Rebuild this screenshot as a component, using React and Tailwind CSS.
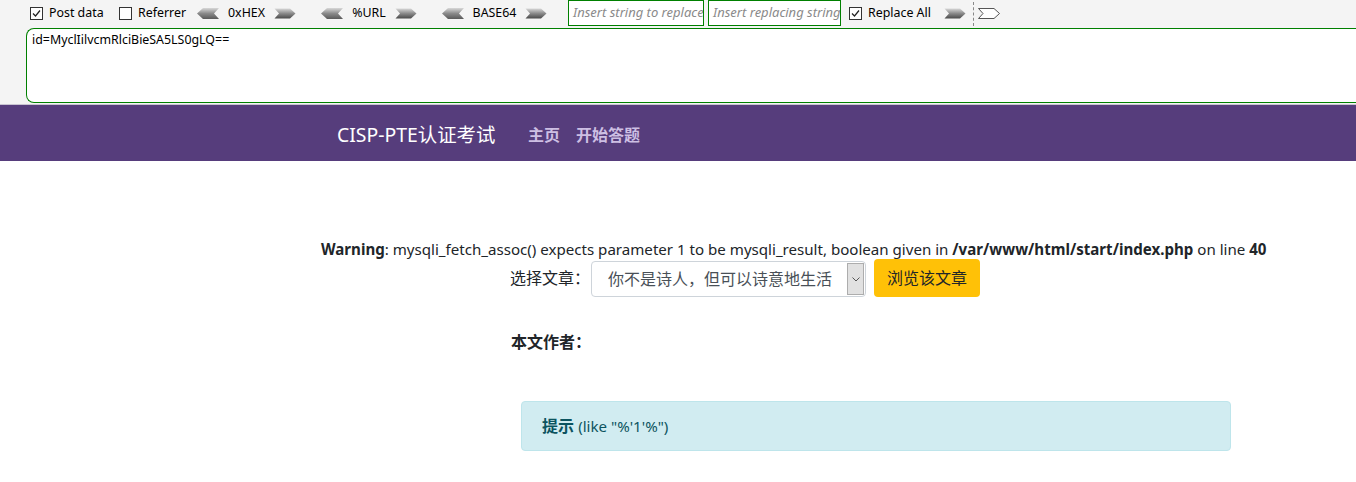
import React from 'react';

const font = { fontFamily: '"Noto Sans", "Noto Sans CJK SC", sans-serif' };

const LeftArrow = () => (
  <svg width="22" height="11" viewBox="0 0 22 11">
    <defs>
      <linearGradient id="ga" x1="0" y1="0" x2="0" y2="1">
        <stop offset="0" stopColor="#d8d8d8" />
        <stop offset="0.5" stopColor="#8a8a8a" />
        <stop offset="1" stopColor="#5a5a5a" />
      </linearGradient>
    </defs>
    <polygon points="0,5.5 6,0 22,0 17,5.5 22,11 6,11" fill="url(#ga)" />
  </svg>
);

const RightArrow = ({ white }) => (
  <svg width="22" height="11" viewBox="0 0 22 11">
    <defs>
      <linearGradient id="gb" x1="0" y1="0" x2="0" y2="1">
        <stop offset="0" stopColor="#d8d8d8" />
        <stop offset="0.5" stopColor="#8a8a8a" />
        <stop offset="1" stopColor="#4a4a4a" />
      </linearGradient>
    </defs>
    <polygon
      points="0.5,0.5 16,0.5 21.5,5.5 16,10.5 0.5,10.5 5,5.5"
      fill={white ? '#ffffff' : 'url(#gb)'}
      stroke={white ? '#555' : 'none'}
      strokeWidth="1"
    />
  </svg>
);

const Check = ({ checked }) => (
  <span className="w-[13px] h-[13px] shrink-0 border border-[#333] bg-white flex items-center justify-center">
    {checked && (
      <svg width="9" height="9" viewBox="0 0 9 9">
        <path d="M1 4.5 L3.5 7 L8 1.5" fill="none" stroke="#222" strokeWidth="1.2" />
      </svg>
    )}
  </span>
);

const Encoder = ({ label, w }) => (
  <div className="flex items-center">
    <LeftArrow />
    <span className={`${w} text-center`}>{label}</span>
    <RightArrow />
  </div>
);

export default function App() {
  return (
    <div className="min-h-[482px] bg-white text-[#212529]" style={font}>
      {/* HackBar */}
      <div className="bg-[#f4f4f4] h-[105px] border-b border-[#c9c4d2] text-[12.4px] text-black">
        <div className="h-[27px] flex items-center">
          <label className="ml-[30px] flex items-center">
            <Check checked />
            <span className="ml-[6px] w-[70px]">Post data</span>
          </label>
          <label className="flex items-center">
            <Check />
            <span className="ml-[6px] w-[59px]">Referrer</span>
          </label>
          <Encoder label="0xHEX" w="w-[55px]" />
          <div className="ml-[25px]">
            <Encoder label="%URL" w="w-[52px]" />
          </div>
          <div className="ml-[25px]">
            <Encoder label="BASE64" w="w-[61px]" />
          </div>
          <div className="ml-[21px] self-start h-[26px] w-[136px] border border-[#008000] bg-white px-[4px] flex items-center overflow-hidden">
            <span className="italic text-[#8a8a8a] whitespace-nowrap text-[13px]">Insert string to replace</span>
          </div>
          <div className="ml-[4px] self-start h-[26px] w-[133px] border border-[#008000] bg-white px-[4px] flex items-center overflow-hidden">
            <span className="italic text-[#8a8a8a] whitespace-nowrap text-[13px]">Insert replacing string</span>
          </div>
          <label className="ml-[8px] flex items-center">
            <Check checked />
            <span className="ml-[6px] w-[76px]">Replace All</span>
          </label>
          <RightArrow />
          <div className="ml-[7px] h-[24px] border-l border-dashed border-[#888]" />
          <div className="ml-[4px]">
            <RightArrow white />
          </div>
        </div>
        <div className="ml-[26px] mt-[1px] h-[75px] border border-[#008000] rounded-l-[8px] border-r-0 bg-white px-[5px] pt-[2px]">
          id=MyclIilvcmRlciBieSA5LS0gLQ==
        </div>
      </div>

      {/* Navbar */}
      <nav className="h-[56px] bg-[#563d7c] flex items-center pt-[3px]">
        <span className="ml-[337px] w-[191px] text-white text-[19.4px] whitespace-nowrap">CISP-PTE认证考试</span>
        <a className="text-[#cdbfe3] font-bold text-[16px]">主页</a>
        <a className="ml-[16px] text-[#cdbfe3] font-bold text-[16px]">开始答题</a>
      </nav>

      {/* Content */}
      <div className="pt-[76px] text-[16px]">
        <div className="ml-[321px] whitespace-nowrap leading-[24px] text-[15.1px]">
          <b>Warning</b>: mysqli_fetch_assoc() expects parameter 1 to be mysqli_result, boolean given in{' '}
          <b>/var/www/html/start/index.php</b> on line <b>40</b>
        </div>
        <div className="ml-[510px] mt-[-2px] flex items-center">
          <span className="w-[81px] whitespace-nowrap">选择文章：</span>
          <div className="mt-[2px] w-[275px] h-[36px] border border-[#ced4da] rounded-[4px] flex items-stretch overflow-hidden bg-white">
            <span className="flex-1 pl-[16px] flex items-center text-[#495057]">你不是诗人，但可以诗意地生活</span>
            <span className="w-[17px] my-[1px] mr-[1px] bg-[#e1e1e1] border border-[#adadad] flex items-center justify-center">
              <svg width="8" height="5" viewBox="0 0 8 5">
                <path d="M0.5 0.5 L4 4 L7.5 0.5" fill="none" stroke="#555" strokeWidth="1" />
              </svg>
            </span>
          </div>
          <button className="ml-[8px] h-[38px] w-[106px] bg-[#ffc107] rounded-[4px] text-[#212529]">浏览该文章</button>
        </div>
        <div className="ml-[511px] mt-[33px] font-bold">本文作者：</div>
        <div className="ml-[521px] mt-[47px] w-[710px] h-[50px] bg-[#d1ecf1] border border-[#bee5eb] rounded-[4px] text-[#0c5460] flex items-center pl-[20px]">
          <b>提示</b>&nbsp;<span className="text-[15.1px]">(like "%'1'%")</span>
        </div>
      </div>
    </div>
  );
}
